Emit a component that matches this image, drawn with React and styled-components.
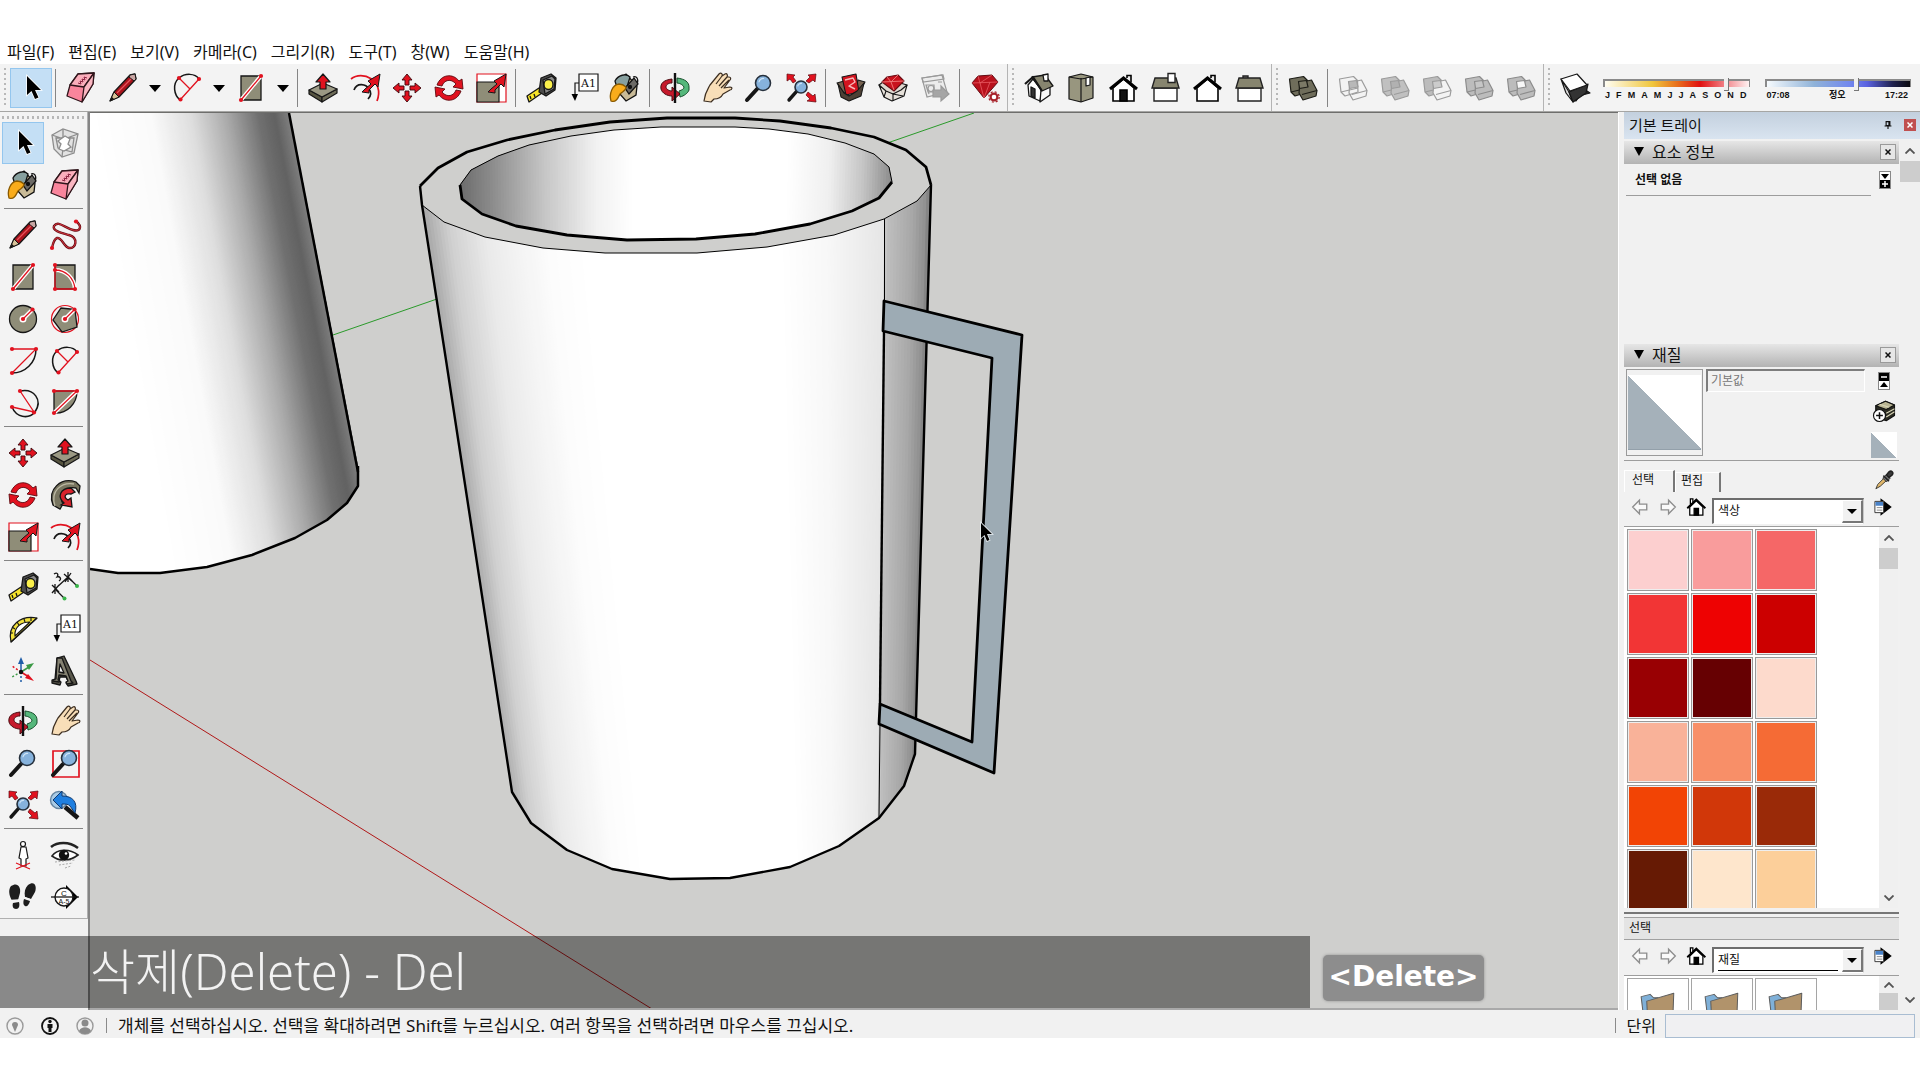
import React from 'react';
import styled, { createGlobalStyle, css } from 'styled-components';

const Global = createGlobalStyle`
  *, *::before, *::after { box-sizing: border-box; }
  body { margin: 0; background: #fff; }
  body, button, input, select { font-family: "Noto Sans", "Noto Sans CJK KR", sans-serif; color: #111; }
  button { border: 0; background: none; padding: 0; margin: 0; }
`;

const RED = '#e1121f';
const OLIVE = '#8f8d78';
const INK = '#161616';

/* ---------- icon drawings, all on a 32 x 32 grid ---------- */

const Dot = ({ x, y, r = 2.1 }) => <circle cx={x} cy={y} r={r} fill={RED} stroke="none" />;

const Lens = ({ cx = 20, cy = 11, r = 7.5, to = '4 28', w = 4 }) => (
  <g>
    <path d={`M${cx - r * 0.7} ${cy + r * 0.7}L${to}`} stroke={INK} strokeWidth={w} strokeLinecap="round" />
    <circle cx={cx} cy={cy} r={r} fill="#86b2dc" stroke="#26303c" strokeWidth="1.6" />
    <path d={`M${cx - r * 0.55} ${cy - r * 0.1}a${r * 0.6} ${r * 0.6} 0 0 1 ${r * 0.7} -${r * 0.5}`} stroke="#cfe4f6" strokeWidth="1.2" />
  </g>
);

const BigArrow = () => (
  <path d="M16 17l6-5-3-3 12-7-2 13-3-3-6 6 0 3-7-1z" fill={RED} stroke={INK} strokeWidth="1" />
);

const House = ({ door }) => (
  <g stroke="#000" strokeWidth="1.6">
    <path d="M20 6v-2.500h4v7" fill="#eee" />
    <path d="M6 16v13h21v-13l-10.500-9z" fill="#fff" />
    <path d="M3 17L16.500 6 30 17" strokeWidth="3" />
    {door && <path d="M13 18h7v11h-7z" fill="#111" />}
  </g>
);

const Barn = ({ chimney }) => (
  <g stroke="#222" strokeWidth="1.4">
    <path d="M5 16h23v13h-23z" fill="#fff" />
    {!chimney && <path d="M10 6v-2h5v2" fill="#888" />}
    <path d="M6 6h21l3 10h-27z" fill="#87856f" />
    {chimney && <path d="M19 1.500h7v9h-7z" fill="#fff" />}
  </g>
);

const Solids = ({ a, b, mid, stroke }) => (
  <g stroke={stroke} strokeWidth="1.200" strokeLinejoin="round">
    <path d="M2.500 7L16.500 4.500 20.500 8.500 21 20 8 24 4 20z" fill={a} />
    <path d="M4 20l17-4" />
    <path d="M13 10.500L24.500 8 30 18.500 29 24 16 28 12 21z" fill={b} />
    <path d="M15 22.500L30 18.500" />
    <path d="M11.500 9.500L19.500 8.500 21 15 12.500 16.500z" fill={mid} />
  </g>
);

const icons = {
  cursor: <path d="M12 4v19l4.500-4 3.500 8 3.500-1.500-3.500-7.500 6 0z" fill="#000" stroke="#fff" strokeWidth="1.600" paintOrder="stroke" />,
  component: (
    <g stroke="#8d8d8d" strokeWidth="1.300">
      <path d="M3 8l11-6 15 5-4 19-12 4-8-8z" fill="#e2e2e2" />
      <path d="M3 8l12 4 14-5M15 12l-2 18M7 11l2 10 14 4 2-14zM14 2l0 9" />
      <path d="M9 14l7-5 5 3-2 5 3 3-7 4-5-2 2-5z" fill="#fff" />
    </g>
  ),
  paint: (
    <g stroke="#111" strokeWidth="1.300">
      <path d="M24 5c5-2 6 5 3 8" />
      <path d="M8 8l9-6 11 12-1 9-10 6-7-8z" fill="#c9bb98" />
      <path d="M6 9c3-6 11-8 15-4l-3 10-9 4z" fill="#87a09f" />
      <path d="M16 16l9-10 4 6-9 10z" fill="#6c6a66" />
      <circle cx="21" cy="15" r="1.500" fill="#111" />
      <path d="M10 12c-7 1-10 10-8 17 5 2 7-3 9-7 3-3 6-3 6-7-2-2-4-3-7-3z" fill="#f9ac1b" stroke="#8a5a00" />
    </g>
  ),
  eraser: (
    <g stroke="#30151b" strokeWidth="1.300" strokeLinejoin="round">
      <path d="M13 2l16-1-1 11-11 18-15-6 3-11z" fill="#f9859c" />
      <path d="M13 2l16-1-10 14-14-2z" fill="#fbaebb" />
      <path d="M19 15l10-14-1 11-11 18z" fill="#fbb7c2" />
      <path d="M13 11l3 1-1-3 3 1-1-3 3 1-1-3 3 1" stroke="#8c2240" strokeWidth="1" />
    </g>
  ),
  pencil: (
    <g strokeLinejoin="round">
      <path d="M3 29l4-9 16-17 5-1 1 5-17 18z" fill="#a9141c" stroke={INK} strokeWidth="1.300" />
      <path d="M3 29l4-9 5 5z" fill="#d8c39a" stroke={INK} />
      <path d="M3 29l2-4 2 2z" fill="#111" />
      <path d="M23 3l5-1 1 5-2 2-5-4z" fill="#c9a7a4" stroke={INK} />
      <path d="M10 21L24 7" stroke="#e8505a" strokeWidth="1.200" />
    </g>
  ),
  freehand: (
    <g>
      <path d="M27 2c7 6 4 11-3 9-8-2-15-10-19-4-2 5 8 7 15 9 10 3 7 14 0 13-6-2-7-11-12-10-3 1-4 5-5 10" stroke="#6b1016" strokeWidth="2.400" />
      <path d="M27 2c7 6 4 11-3 9-8-2-15-10-19-4-2 5 8 7 15 9 10 3 7 14 0 13-6-2-7-11-12-10-3 1-4 5-5 10" stroke="#d5343e" strokeWidth="1" />
      <Dot x={27} y={2.500} /><Dot x={3} y={29} />
    </g>
  ),
  rect: (
    <g>
      <path d="M6 4h20v24h-20z" fill={OLIVE} stroke={INK} strokeWidth="1.300" />
      <path d="M6 28L26 4" stroke="#fff" strokeWidth="4" />
      <path d="M6 28L26 4" stroke={RED} strokeWidth="1.300" />
      <Dot x={6} y={28} /><Dot x={26} y={4} />
    </g>
  ),
  roundedRect: (
    <g>
      <path d="M6 4h20v24h-20z" fill={OLIVE} stroke={INK} strokeWidth="1.300" />
      <path d="M6 9C17 9 25 17 26 28" stroke="#fff" strokeWidth="4" />
      <path d="M6 4v24h20C25 17 17 9 6 9" stroke={RED} strokeWidth="1.300" />
      <Dot x={6} y={4} /><Dot x={6} y={9} /><Dot x={6} y={28} /><Dot x={26} y={28} />
    </g>
  ),
  circle: (
    <g>
      <circle cx="16" cy="16" r="13.500" fill={OLIVE} stroke={INK} strokeWidth="1.300" />
      <path d="M16 16L25 7" stroke="#fff" strokeWidth="4" />
      <circle cx="16" cy="16" r="3.500" fill="#fff" />
      <path d="M16 16L25 7" stroke={RED} strokeWidth="1.300" /><Dot x={16} y={16} /><Dot x={25.500} y={6.500} />
    </g>
  ),
  polygon: (
    <g>
      <circle cx="16" cy="16" r="13.500" stroke={RED} strokeWidth="1.200" />
      <path d="M26 6.500L12 5 4 17l9 12 15-5z" fill={OLIVE} stroke={INK} strokeWidth="1.300" />
      <path d="M16 16L25 7" stroke="#fff" strokeWidth="4" />
      <circle cx="16" cy="16" r="3.500" fill="#fff" />
      <path d="M16 16L25 7" stroke={RED} strokeWidth="1.300" /><Dot x={16} y={16} /><Dot x={25.500} y={6.500} />
    </g>
  ),
  arcLine: (
    <g>
      <path d="M29 4C29 18 18 28 5 28" stroke={INK} strokeWidth="1.500" />
      <path d="M5 4H29L5 28" stroke={RED} strokeWidth="1.300" />
      <Dot x={5} y={4} /><Dot x={29} y={4} /><Dot x={5} y={28} />
    </g>
  ),
  arc: (
    <g>
      <path d="M8 6C14 1 24 1 28 7M8 6C1 12 3 23 9 28" stroke={INK} strokeWidth="1.500" />
      <path d="M8 6L19 17M28 7L9 28" stroke={RED} strokeWidth="1.300" />
      <Dot x={8} y={6} /><Dot x={28} y={7} /><Dot x={9.500} y={27.500} />
    </g>
  ),
  arc3: (
    <g>
      <path d="M13 4C27 1 36 13 28 25 21 33 9 30 5 20" stroke={INK} strokeWidth="1.500" />
      <path d="M13 4L27 25 5 20" stroke={RED} strokeWidth="1.300" />
      <Dot x={13} y={4} /><Dot x={27} y={25.500} /><Dot x={5} y={20} />
    </g>
  ),
  pie: (
    <g>
      <path d="M5 4H28C28 17 18 27 5 26z" fill={OLIVE} stroke={INK} strokeWidth="1.300" />
      <path d="M5 26L28 4" stroke="#fff" strokeWidth="4" />
      <path d="M5 26L28 4H5" stroke={RED} strokeWidth="1.300" />
      <Dot x={5} y={4} /><Dot x={28} y={4} /><Dot x={5} y={26} />
    </g>
  ),
  pushpull: (
    <g stroke={INK} strokeWidth="1.200" strokeLinejoin="round">
      <path d="M2 18l13 7v5l-13-8z" fill="#55533f" />
      <path d="M15 25l15-8v4l-15 9z" fill="#6d6b57" />
      <path d="M2 18l14-7 14 6-15 8z" fill="#9b9984" />
      <path d="M13 17v-7h-4l7-8 7 8h-4v7z" fill={RED} />
    </g>
  ),
  offset: (
    <g>
      <path d="M2 7C13-2 36 8 28 29" stroke={RED} strokeWidth="1.700" />
      <path d="M5 18c3-8 12-6 15-1 3 4 2 7-1 10" stroke={INK} strokeWidth="1.700" />
      <BigArrow />
    </g>
  ),
  move: (
    <g fill={RED} stroke="#3a080b" strokeWidth="0.900">
      {[0, 90, 180, 270].map((a) => (
        <path key={a} transform={`rotate(${a} 16 16)`} d="M16 2l5 6h-3v5h-4v-5h-3z" />
      ))}
    </g>
  ),
  rotate: (
    <g fill={RED} stroke="#5c0a10" strokeWidth="0.900">
      <path d="M4 13C8 2 20 1 26 9l3-2 1 10-10-2 3-3C18 6 11 8 9 14z" />
      <path d="M28 19C24 30 12 31 6 23l-3 2-1-10 10 2-3 3C14 26 21 24 23 18z" />
    </g>
  ),
  scale: (
    <g>
      <path d="M2 2h29v28h-29z" stroke={RED} strokeWidth="1.200" fill="#fff" />
      <path d="M2 10h22v20h-22z" fill={OLIVE} stroke={INK} strokeWidth="1.200" />
      <BigArrow />
    </g>
  ),
  followme: (
    <g stroke={INK} strokeWidth="1.300">
      <path d="M27 3C12-2-2 10 4 26l7 4 3-5C9 16 17 7 27 9l3 5 1-7z" fill="#77745f" />
      <path d="M6 27C1 12 12 3 25 5" stroke="#bbb8a4" />
      <path d="M22 9c-11 0-14 9-7 15l-3 2 11 2-1-9-3 2c-5-3-3-7 3-6l4-2z" fill="#d9222c" />
    </g>
  ),
  tape: (
    <g stroke={INK} strokeWidth="1.300" strokeLinejoin="round">
      <path d="M2 24l12-8 3 5-13 9z" fill="#f7e52a" />
      <path d="M5 24l1 3M9 22l1 3" />
      <path d="M16 6l10-4 5 4-1 12-9 6-7-4z" fill="#4b4b4b" />
      <path d="M18 8l9-4 3 3-1 10-9 5z" fill="#8a8a8a" />
      <ellipse cx="23.500" cy="12.500" rx="4.500" ry="5" fill="#fbf04b" />
    </g>
  ),
  dimension: (
    <g stroke={INK} strokeWidth="1.300">
      <path d="M6 18L19 6M3 14l7 7M10 14l-7 8M6 13v10M15 3l8 7M22 2l-6 9M19 1v10" />
      <path d="M6 18l9 9M19 6l9 9" />
      <circle cx="15.500" cy="27.500" r="2" fill="#39b54a" stroke="none" /><circle cx="28" cy="15" r="2" fill="#39b54a" stroke="none" />
      <path d="M5 3c3-2 5 0 3 3 3-1 5 2 2 4" />
    </g>
  ),
  protractor: (
    <g stroke={INK} strokeWidth="1.200" strokeLinejoin="round">
      <path d="M4 29C0 12 14 2 30 5z" fill="#f2e13a" />
      <path d="M8 23C7 14 14 9 23 9z" fill="#fff" />
      <path d="M3 20l3 0M5 14l3 2M10 9l2 3M17 6l1 3M24 5l0 3M4 29L30 5" />
    </g>
  ),
  label: (
    <g>
      <path d="M12 2h19v17h-19z" fill="#fff" stroke={INK} strokeWidth="1.200" />
      <text x="21.500" y="14.500" textAnchor="middle" fontFamily="DejaVu Serif, serif" fontSize="11" fill="#111">A1</text>
      <path d="M12 11h-4v13" stroke={INK} strokeWidth="1.200" />
      <path d="M4.500 22h6.500l-3 7z" fill="#000" />
    </g>
  ),
  axes: (
    <g strokeWidth="1.500">
      <path d="M14 17V8" stroke="#1f5da8" /><path d="M11 9l3-7 3 7z" fill="#1f5da8" />
      <path d="M14 17l8-5" stroke="#3b9a45" /><path d="M19 10l8-2-5 7z" fill="#3b9a45" />
      <path d="M14 17l8 5" stroke={RED} /><path d="M21 19l6 7-9-3z" fill={RED} />
      <path d="M14 17v12" stroke="#1f5da8" strokeDasharray="2 2" />
      <path d="M14 17l-9-6" stroke={RED} strokeDasharray="2 2" /><path d="M14 17l-9 5" stroke="#3b9a45" strokeDasharray="2 2" />
      <circle cx="14" cy="17" r="2.200" fill="#111" />
    </g>
  ),
  text3d: (
    <g stroke={INK} strokeWidth="1.300" strokeLinejoin="round">
      <path d="M8 3l7-2 12 25 1 3-9 2-2-3 2-2-2-4h-6l-1 4 2 1-1 3-8-2v-3l3-1z" fill="#5b594c" />
      <path d="M8 3l5 0 9 23 2 2-6 1-1-2 2-1-2-5-7-1-1 5 2 1-1 1-6-1v-1l3-1z" fill="#858272" />
      <path d="M10 17l1-8 4 9z" fill="#f2f2f2" />
    </g>
  ),
  orbit: (
    <g strokeLinejoin="round">
      <path d="M18 6C26 7 30 10 30 15v3c-1 3-5 6-9 7l-1-6c3-1 5-2 5-4-1-2-4-4-7-4z" fill="#55b77b" stroke="#174f2c" />
      <path d="M13 7C5 8 1 11 2 17 3 21 8 24 13 24v5l8-7-8-7v4C10 19 7 17 7 15c0-2 2-4 6-4z" fill="#c5192b" stroke="#4b0a10" />
      <path d="M16 1v30" stroke="#111" strokeWidth="2.400" />
    </g>
  ),
  pan: (
    <path d="M3 29c1-9 4-12 6-16L18 2c2-2 4 0 3 2l3-2c2-1 3 1 2 3l2 0c2 0 2 2 1 3l-6 8 6-1c3 0 2 3 0 3l-7 4c-2 4-6 5-9 5l-3 3zM21 4l-6 8M26 5l-8 9M28 8l-8 8" fill="#f8deb8" stroke="#3b2d20" strokeWidth="1.200" strokeLinejoin="round" />
  ),
  zoom: <Lens />,
  zoomWindow: <g><path d="M4 4h26v26h-26z" stroke={RED} strokeWidth="1.700" /><Lens cx={20} cy={11} /></g>,
  zoomExtents: (
    <g>
      <Lens cx={16} cy={15} r={6} to="4 28" w={3.400} />
      <g fill={RED} stroke="#5c0a10" strokeWidth="0.700">
        <path d="M2 2l8 1-2 2 3 4-3 2-3-4-3 2z" /><path d="M31 2l-8 1 2 2-4 4 3 2 4-3 2 2z" /><path d="M31 30l-1-8-2 2-5-4-2 3 4 4-3 2z" />
      </g>
    </g>
  ),
  previous: (
    <g>
      <circle cx="10" cy="11" r="8.500" fill="#a9cbe6" stroke="#6685a0" strokeWidth="1.400" />
      <path d="M16 18L29 29" stroke={INK} strokeWidth="4.500" />
      <path d="M4 11L13 2v5c11 0 16 6 13 17l-5-7c-2-2-4-2-8-2v5z" fill="#1f7fe0" stroke="#123a6e" />
    </g>
  ),
  position: (
    <g stroke={INK} strokeWidth="1.200">
      <circle cx="16" cy="5" r="2.500" fill="#fff" />
      <path d="M14 8h5l2 11-2 1v7h-5v-7l-2-1z" fill="#fff" />
      <path d="M9 24l14 6M23 24L9 30" stroke={RED} />
    </g>
  ),
  eye: (
    <g>
      <path d="M2 8C8 3 20 2 29 9" stroke="#222" strokeWidth="2.500" />
      <path d="M3 17c5-7 17-8 26-1-8 6-18 7-26 1z" fill="#fff" stroke="#222" strokeWidth="1.600" />
      <circle cx="15" cy="16" r="5.200" fill="#111" /><circle cx="17" cy="14.500" r="1.300" fill="#fff" />
      <path d="M6 23l20-2M10 26l14-2M16 29l6-2" stroke="#aaa" strokeDasharray="2 1.500" />
    </g>
  ),
  walk: (
    <g fill="#1d1d1d">
      <path d="M4 5c6-4 10 0 9 7l-2 7-6 1C2 14 1 9 4 5z" /><path d="M6 22l6-1c1 4 0 7-3 7s-4-3-3-6z" />
      <path d="M21 4c7-5 9 2 7 7l-4 7-6-2c-1-5 0-9 3-12z" /><path d="M17 18l6 2c-1 4-3 6-5 5-2-1-2-4-1-7z" />
      <path d="M4 19.500l8-.500M16 16l8 3" stroke="#f3f3f3" strokeWidth="1.500" />
    </g>
  ),
  section: (
    <g>
      <path d="M17 4l12 12-12 12z" fill="#000" />
      <circle cx="15" cy="16" r="9" fill="#fff" stroke={INK} strokeWidth="1.400" />
      <path d="M2 16h28" stroke={INK} strokeWidth="1.300" />
      <text x="15" y="14.500" textAnchor="middle" fontFamily="Liberation Sans, sans-serif" fontSize="8" fill="#111">C</text>
      <text x="15" y="23" textAnchor="middle" fontFamily="Liberation Sans, sans-serif" fontSize="7" fill="#111">A-5</text>
    </g>
  ),
  warehouse: (
    <g stroke={INK} strokeWidth="1.100" strokeLinejoin="round">
      <path d="M2 11l7-2 6 10-6 2z" fill="#776351" /><path d="M23 8l7 2-5 9-4-3z" fill="#776351" />
      <path d="M7 5l14-3 3 18-13 3z" fill="#d3141f" />
      <path d="M10 8l8-2 2 4-6 4 6 3" stroke="#f6b8b8" strokeWidth="1.400" />
      <path d="M3 12l6 9 5 3 8-5 7-8-3 13-12 5-8-4z" fill="#4d4035" />
    </g>
  ),
  extension: (
    <g stroke={INK} strokeWidth="1.100" strokeLinejoin="round">
      <path d="M2 13l8-6 20 6-4 7-16 3z" fill="#ded8d0" />
      <path d="M5 10l5-5 11-2 6 6-10 10z" fill="#c9121d" stroke="#680b12" />
      <path d="M5 10l22-1M10 5l4 5 7-7M14 10l3 8" stroke="#f07a7a" strokeWidth="0.900" />
      <path d="M2 13l7 6 7 3 8-4 6-5-3 11-12 5-8-4z" fill="#e6e1da" />
      <path d="M7 25l2-6M26 24l-10-2v7" />
    </g>
  ),
  sendLayout: (
    <g stroke="#9a9a9a" strokeWidth="1.200">
      <path d="M3 6l20-3 5 17-20 5z" fill="#ececec" /><path d="M3 6l21-3 1 4-21 3zM7 13l3 9M7 13h8v7h-6zM19 10l4 0" />
      <circle cx="12" cy="16.500" r="3" />
      <path d="M14 18h8v-4l8 8-8 7v-4h-8z" fill="#a5a5a5" />
    </g>
  ),
  ruby: (
    <g strokeLinejoin="round">
      <path d="M3 11l6-7 14-1 6 7-14 16z" fill="#b8111c" stroke="#610a11" />
      <path d="M9 4l2 7 12-8M3 11l26-1M11 11l4 15 6-16" stroke="#e85a62" strokeWidth="0.800" />
      <circle cx="25" cy="25" r="3.400" fill="#fff" stroke="#a8232b" strokeWidth="2.200" />
      <circle cx="25" cy="25" r="5.200" stroke="#a8232b" strokeWidth="1.300" strokeDasharray="2 2.100" />
    </g>
  ),
  iso: (
    <g stroke={INK} strokeWidth="1.300" strokeLinejoin="round">
      <path d="M5 13l5-6 9 11-2 11-11-5z" fill="#fff" /><path d="M18 18l9-4v9l-10 7z" fill="#f7f7f7" />
      <path d="M8 15l4 2v9l-4-2z" fill="#333" />
      <path d="M9 5l13-2 8 11-11 5z" fill="#87856f" /><path d="M2 12l8-7 9 14" strokeWidth="2.200" />
      <path d="M20 3l5-1 0 7-4 0z" fill="#fff" />
    </g>
  ),
  topView: (
    <g stroke={INK} strokeWidth="1.200" strokeLinejoin="round">
      <path d="M4 5l12-3 12 3v21l-12 4-12-3z" fill="#98967f" /><path d="M16 6v24M4 5l12 2 12-2" />
      <path d="M21 6l4-1v8l-4 1z" fill="#fff" />
    </g>
  ),
  front: <House door />,
  right: <Barn chimney />,
  back: <House />,
  left: <Barn />,
  outerShell: <Solids a="#6f6d5b" b="#6f6d5b" mid="#7b7966" stroke="#1d1d17" />,
  intersect: <Solids a="none" b="none" mid="#b8b8b8" stroke="#9b9b9b" />,
  union: <Solids a="#c0c0c0" b="#c0c0c0" mid="#b1b1b1" stroke="#9b9b9b" />,
  subtract: <Solids a="#bcbcbc" b="#f3f3f3" mid="#ccc" stroke="#9b9b9b" />,
  trim: <Solids a="#bcbcbc" b="#bcbcbc" mid="#c6c6c6" stroke="#8c8c8c" />,
  split: <Solids a="#bcbcbc" b="#bcbcbc" mid="#f7f7f7" stroke="#8c8c8c" />,
  shadows: (
    <g stroke={INK} strokeWidth="1.200" strokeLinejoin="round">
      <path d="M12 26l19-5-6-4-8 12-4-1z" fill="#222" />
      <path d="M2 7l8 13 4 10-7-9z" fill="#ddd" /><path d="M10 20l19-8-2 9-13 9z" fill="#333" />
      <path d="M2 7l16-5 10 11-17 6z" fill="#fff" />
    </g>
  ),
  navLeft: <path d="M3 16L15 4v7h13v10h-13v7z" fill="#fafafa" stroke="#8e8e8e" strokeWidth="2.400" />,
  navRight: <path d="M29 16L17 4v7h-13v10h13v7z" fill="#fafafa" stroke="#8e8e8e" strokeWidth="2.400" />,
  home: (
    <g stroke="#000" strokeWidth="2">
      <path d="M7 12V3h4v5" fill="#fff" /><path d="M6 16v13h21v-13l-10.500-10z" fill="#fff" />
      <path d="M2 18L16.500 4 31 18" strokeWidth="3" /><path d="M13 18h7v11h-7z" fill="#000" />
    </g>
  ),
  details: (
    <g>
      <path d="M12 2l18 14-18 14z" fill="#000" />
      <path d="M3 7h14v18h-14z" fill="#fff" stroke="#333" strokeWidth="1.500" />
      <path d="M4 8h12v6h-12z" fill="#4a83c9" /><path d="M6 17h9M6 21h9" stroke="#888" strokeWidth="1.500" />
    </g>
  ),
  createMaterial: (
    <g stroke="#111" strokeWidth="1.500" strokeLinejoin="round">
      <path d="M5 9l13-6 12 5v14l-11 7-14-5z" fill="#2b2b22" />
      <path d="M5 9l13-6 12 5-11 6z" fill="#b9b593" /><path d="M10 7l13 4M19 19l11-6M19 24l11-7" stroke="#d9d6b8" />
      <circle cx="10" cy="22" r="8" fill="#fff" /><path d="M10 17.500v9M5.500 22h9" strokeWidth="2" />
    </g>
  ),
  dropper: (
    <g stroke="#222" strokeWidth="1.300">
      <path d="M3 30l3-7L18 11l4 4L10 26z" fill="#e0b76a" /><path d="M14 13l6-6 6 6-6 6z" fill="#777" />
      <path d="M15 9l9 9M20 8l4-5c4-3 8 1 5 5l-5 4z" fill="#3b3b3b" strokeWidth="2.500" />
    </g>
  ),
  pin: <path d="M10 5h12v13h-12zM19 5v13M5 19h22M16 19v10" stroke="#111" strokeWidth="3.600" />,
  folder: (
    <g stroke="#5d5d5d" strokeWidth="0.900" strokeLinejoin="round">
      <path d="M1 5l8-2 3 3 4 0v24H4z" fill="#7fb0d8" /><path d="M6 9L30 2l-1 28H7z" fill="#b1936b" />
    </g>
  ),
};

const Glyph = styled.svg`
  display: block;
  flex: none;
  width: ${(p) => p.$size}px;
  height: ${(p) => p.$size}px;
  overflow: visible;
`;

const Icon = ({ name, size = 32 }) => (
  <Glyph $size={size} viewBox="0 0 32 32" fill="none" aria-hidden="true">{icons[name]}</Glyph>
);

/* ---------- frame ---------- */

const Page = styled.div`
  display: flex;
  flex-direction: column;
  height: 100vh;
  min-height: 900px;
  padding: 44px 0 42px;
`;

const MenuBar = styled.nav`
  display: flex;
  gap: 14px;
  height: 20px;
  padding-left: 7px;
`;

const MenuItem = styled.button`
  height: 16px;
  font-size: 16px;
  line-height: 16px;
  white-space: nowrap;
`;

const Toolbar = styled.header`
  display: flex;
  height: 48px;
  background: #f3f3f3;
  border-bottom: 1px solid #a6a6a4;
`;

const ToolGroup = styled.div`
  display: flex;
  align-items: center;
  padding: 1px 1px 0 4px;
  border-right: 1px solid #b4b4b4;
  ${(p) => p.$fill && css`flex: 1; border-right: 0;`}
`;

const Grip = styled.span`
  flex: none;
  ${(p) => p.$across
    ? css`height: 3px; margin: 4px 0 3px; background: repeating-linear-gradient(90deg, #b8b8b8 0 2px, transparent 2px 5px);`
    : css`width: 2px; height: 40px; margin-right: 4px; background: repeating-linear-gradient(#b8b8b8 0 2px, transparent 2px 5px);`}
`;

const ToolButton = styled.button`
  display: grid;
  place-items: center;
  flex: none;
  width: 42px;
  height: ${(p) => (p.$tall ? 42 : 40)}px;
  ${(p) => p.$on && css`background: #c4dff5; border: 1px solid #94c6ee;`}
`;

const DropButton = styled.button`
  display: grid;
  place-items: center;
  width: 22px;
  height: 40px;
  &::after {
    content: "";
    border: 6px solid transparent;
    border-top: 7px solid #000;
    border-bottom: 0;
  }
`;

const Rule = styled.span`
  flex: none;
  ${(p) => p.$across
    ? css`height: 8px; margin: 0 2px; background: linear-gradient(#858585, #858585) 0 2px / 100% 1px no-repeat;`
    : css`width: 8px; height: 38px; background: linear-gradient(#858585, #858585) 3px 0 / 1px 100% no-repeat;`}
`;

const Sun = styled.div`
  display: flex;
  gap: 15px;
  flex: 1;
  padding: 0 8px 0 7px;
`;

const SunField = styled.label`
  display: flex;
  flex-direction: column;
  flex: 1;
`;

const Range = styled.input`
  appearance: none;
  display: block;
  width: 100%;
  height: 14px;
  margin: 0;
  background: transparent;
  &::-webkit-slider-runnable-track {
    height: 8px;
    border: solid #8a8a8a;
    border-width: 2px 1px 0 2px;
    background: ${(p) => p.$track};
  }
  &::-webkit-slider-thumb {
    appearance: none;
    width: 5px;
    height: 13px;
    margin-top: -3px;
    background: #f0f0f0;
    border: solid #777;
    border-width: 0 1px 1px 0;
  }
`;

const Ticks = styled.span`
  display: flex;
  justify-content: space-between;
  padding: 0 3px 0 2px;
  font: 700 9px/11px "Liberation Sans", "Noto Sans CJK KR", sans-serif;
`;

const Workspace = styled.main`
  position: relative;
  display: flex;
  flex: 1;
  min-height: 0;
`;

const ToolBox = styled.aside`
  display: flex;
  flex-direction: column;
  flex: none;
  width: 90px;
  background: #f1f1f1;
  border-right: 2px solid #858585;
`;

const ToolStack = styled.div`
  display: flex;
  flex-direction: column;
  padding: 0 2px;
  background: #f3f3f3;
  border: solid #b0b0b0;
  border-width: 0 1px 1px 0;
`;

const ToolGrid = styled.div`
  display: grid;
  grid-template-columns: 42px 42px;
`;

const Viewport = styled.div`
  flex: 1;
  min-width: 0;
  background: #cfcfcd;
  border: solid;
  border-width: 1px 0 2px;
  border-color: #6e6e6c transparent #a9a9a9;
`;

const Scene = styled.svg`
  display: block;
  width: 100%;
  height: 100%;
`;

const Caption = styled.div`
  position: absolute;
  left: 0;
  bottom: 2px;
  display: flex;
  align-items: center;
  width: 1310px;
  max-width: 70%;
  height: 72px;
  padding: 0 0 2px 90px;
  background: rgba(0, 0, 0, 0.43);
  color: #f2f2f2;
  font-size: 49px;
  font-weight: 300;
  line-height: 60px;
  white-space: nowrap;
`;

const KeyBadge = styled.kbd`
  position: absolute;
  left: 1323px;
  bottom: 9px;
  width: 161px;
  height: 46px;
  border-radius: 5px;
  background: #8d8d8d;
  box-shadow: 0 0 3px #8d8d8d;
  color: #fff;
  font: 700 28px/44px "DejaVu Sans", sans-serif;
  text-align: center;
`;

/* ---------- tray ---------- */

const Tray = styled.aside`
  display: flex;
  flex-direction: column;
  flex: none;
  width: 302px;
  padding-left: 5px;
  background: #f1f1f1;
  border-left: 1px solid #fff;
`;

const TrayTitle = styled.div`
  display: flex;
  align-items: center;
  flex: none;
  gap: 8px;
  height: 27px;
  padding: 0 4px 2px 5px;
  background: linear-gradient(#c3d0de, #d9e4f0);
  font-size: 15px;
  line-height: 20px;
  span { flex: 1; }
`;

const CloseBox = styled.button`
  display: grid;
  place-items: center;
  width: ${(p) => (p.$red ? 12 : 16)}px;
  height: ${(p) => (p.$red ? 12 : 16)}px;
  background: ${(p) => (p.$red ? '#c0504f' : '#e6e6e6')};
  border: ${(p) => (p.$red ? '0' : '1px solid #9a9a9a')};
  color: ${(p) => (p.$red ? '#fff' : '#111')};
  svg { width: 6px; height: 6px; }
`;

const Cross = () => <svg viewBox="0 0 6 6" aria-hidden="true"><path d="M0.500 0.500l5 5M5.500 0.500l-5 5" stroke="currentColor" strokeWidth="1.500" /></svg>;

const TrayBody = styled.div`
  display: flex;
  flex: 1;
  gap: 1px;
  min-height: 0;
  padding-top: 1px;
`;

const Panels = styled.div`
  display: flex;
  flex-direction: column;
  flex: 1;
  min-width: 0;
  padding-top: 1px;
`;

const SectionHead = styled.h2`
  display: flex;
  align-items: center;
  flex: none;
  height: 23px;
  margin: 0;
  padding: 0 3px 2px 10px;
  background: linear-gradient(#e6e6e6, #b3b3b3);
  font-size: 16px;
  font-weight: 400;
  line-height: 20px;
  &::before {
    content: "";
    margin-right: 8px;
    border: 5px solid transparent;
    border-top: 9px solid #000;
    border-bottom: 0;
  }
  span { flex: 1; }
`;

const EntityInfo = styled.div`
  flex: none;
  height: 180px;
`;

const EntityRow = styled.div`
  display: flex;
  align-items: center;
  justify-content: space-between;
  height: 31px;
  padding: 0 8px 0 11px;
  font-size: 12px;
  font-weight: 700;
  line-height: 16px;
`;

const ThinLine = styled.hr`
  flex: none;
  height: 1px;
  margin: ${(p) => (p.$inset ? '0 28px 0 2px' : '0')};
  border: 0;
  background: #9d9d9d;
`;

const Expander = styled.button`
  display: flex;
  flex-direction: ${(p) => (p.$flip ? 'column-reverse' : 'column')};
  width: 12px;
  height: 18px;
  border: 1px solid #888;
  background: #fff;
  svg { display: block; width: 10px; height: 8px; }
`;

const ExpanderIcon = ({ plus }) => (
  <>
    <svg viewBox="0 0 10 8"><path d={plus ? 'M1 2h8l-4 5z' : 'M1 6h8l-4-5z'} fill="#000" /></svg>
    <svg viewBox="0 0 10 8"><path d="M-1-1h12v10h-12z" fill="#000" /><path d={plus ? 'M2 4h6M5 1v6' : 'M2 4h6'} stroke="#fff" strokeWidth="1.500" /></svg>
  </>
);

const MaterialRow = styled.div`
  display: flex;
  flex: none;
  align-items: flex-start;
  padding: 2px 2px 2px;
`;

const Preview = styled.div`
  width: 77px;
  height: 87px;
  padding: 5px 1px;
  border: 1px solid #9a9a9a;
  &::before {
    content: "";
    display: block;
    height: 75px;
    background: linear-gradient(to top right, #a5b1ba 50%, #fff 50%);
    border-bottom: 1px solid #93a0aa;
  }
`;

const NameField = styled.input`
  flex: 1;
  min-width: 0;
  height: 23px;
  margin-left: 3px;
  padding: 0 3px 2px;
  border: solid;
  border-width: 2px 1px 1px 2px;
  border-color: #7d7d7d #fff #fff #7d7d7d;
  background: #f1f1f1;
  color: #777;
  font-size: 12px;
`;

const MaterialTools = styled.div`
  display: flex;
  flex-direction: column;
  align-items: center;
  gap: 9px;
  width: 32px;
  padding: 3px 0 0 6px;
`;

const DefaultChip = styled.button`
  width: 26px;
  height: 26px;
  background: linear-gradient(to top right, #a5b1ba 50%, #fff 50%);
`;

const TabRow = styled.div`
  display: flex;
  align-items: flex-end;
  flex: none;
  height: 31px;
  padding-right: 4px;
`;

const Tab = styled.button`
  align-self: flex-end;
  width: ${(p) => (p.$on ? 51 : 46)}px;
  height: ${(p) => (p.$on ? 22 : 20)}px;
  padding: 0 0 3px ${(p) => (p.$on ? 7 : 5)}px;
  border: solid;
  border-width: 1px 2px 0 1px;
  border-color: #fff #777 #777 #fff;
  font-size: 12px;
  line-height: 14px;
  text-align: left;
`;

const Spacer = styled.span`flex: 1;`;

const IconButton = styled.button`
  display: grid;
  place-items: center;
  width: ${(p) => p.$w || 28}px;
  height: 24px;
`;

const NavRow = styled.div`
  display: flex;
  align-items: flex-start;
  flex: none;
  height: 34px;
  padding: 3px 2px 0;
`;

const Combo = styled.div`
  display: grid;
  grid-template-columns: 1fr 21px;
  flex: 1;
  height: 26px;
  margin: 3px 5px 0 2px;
  border: solid;
  border-width: 2px 1px 1px 2px;
  border-color: #6d6d6d #c8c8c8 #fff #6d6d6d;
  background: #fff;
`;

const ComboSelect = styled.select`
  grid-area: 1 / 1 / 2 / 3;
  appearance: none;
  min-width: 0;
  margin: 0 25px 1px 4px;
  padding: 0;
  border: 0;
  border-bottom: 1px solid ${(p) => (p.$underline ? '#000' : 'transparent')};
  border-radius: 0;
  background: transparent;
  font-size: 12px;
`;

const ComboArrow = styled.span`
  grid-area: 1 / 2;
  display: grid;
  place-items: center;
  pointer-events: none;
  background: #f1f1f1;
  border: solid;
  border-width: 1px 2px 2px 1px;
  border-color: #fff #777 #777 #fff;
  &::after {
    content: "";
    border: 5px solid transparent;
    border-top: 5px solid #000;
    border-bottom: 0;
  }
`;

const ListRow = styled.div`
  display: flex;
  overflow: hidden;
  padding-right: 1px;
  ${(p) => (p.$grow ? css`flex: 1; min-height: 0;` : css`flex: none; height: 34px;`)}
`;

const Swatches = styled.div`
  display: grid;
  flex: 1;
  grid-template-columns: repeat(3, 62px);
  grid-auto-rows: 62px;
  gap: 2px;
  padding: 2px 3px;
  background: #fff;
`;

const Swatch = styled.button`
  border: 1px solid #999;
  padding: 1px;
  background: ${(p) => p.$color} content-box;
  box-shadow: inset 0 0 0 1px #eee;
`;

const FolderCard = styled.button`
  display: grid;
  place-items: center;
  border: 1px solid #a5a5a5;
  background: #fff;
`;

const ScrollBar = styled.div`
  display: flex;
  flex-direction: column;
  flex: none;
  align-items: center;
  width: ${(p) => p.$w}px;
  background: #f0f0f0;
  button { display: grid; place-items: center; width: 100%; height: 21px; }
  svg { width: 10px; height: 6px; }
`;

const Thumb = styled.span`
  width: 100%;
  height: 21px;
  background: #cdcdcd;
`;

const Chevron = ({ down }) => (
  <svg viewBox="0 0 10 6" fill="none" aria-hidden="true"><path d={down ? 'M0.500 0.500L5 5 9.500 0.500' : 'M0.500 5.500L5 1 9.500 5.500'} stroke="#555" strokeWidth="1.800" /></svg>
);

const Scroller = ({ w, noDown }) => (
  <ScrollBar $w={w}>
    <button aria-label="위로"><Chevron /></button>
    <Thumb />
    <Spacer />
    {!noDown && <button aria-label="아래로"><Chevron down /></button>}
  </ScrollBar>
);

const SubHead = styled.h3`
  flex: none;
  height: 33px;
  margin: 0;
  padding-top: 5px;
  border-top: 4px solid #f1f1f1;
  font-size: 12px;
  font-weight: 400;
  line-height: 20px;
  box-shadow: inset 0 2px #777;
  span {
    display: block;
    height: 23px;
    padding-left: 5px;
    border: solid #a0a0a0;
    border-width: 1px 0;
    background: #e4e4e4;
  }
`;

const StatusBar = styled.footer`
  display: flex;
  align-items: center;
  flex: none;
  height: 28px;
  padding-top: 3px;
  background: #f1f1f1;
  font-size: 17px;
  line-height: 24px;
`;

const StatusIcons = styled.div`
  display: flex;
  gap: 17px;
  padding: 0 12px 0 6px;
  svg { display: block; width: 18px; height: 18px; }
`;

const StatusText = styled.p`
  flex: 1;
  margin: 0 0 0 11px;
`;

const Bar = styled.span`
  width: 1px;
  height: 15px;
  background: #8a8a8a;
`;

const Units = styled.label`
  display: flex;
  align-items: center;
  gap: 9px;
  padding: 0 5px 0 11px;
  font-size: 16px;
`;

const UnitsInput = styled.input`
  width: 250px;
  height: 24px;
  border: 1px solid #a9bdd2;
  background: #f0f0f2;
`;

/* ---------- model ---------- */

const pts = (list) => list.map((p) => p.join(',')).join(' ');

const rimBack = [[420, 186], [438, 168], [467, 152], [507, 140], [555, 130], [610, 122], [667, 118], [735, 118], [780, 121], [831, 128], [874, 137], [906, 150], [926, 167], [931, 185]];
const rimFront = [[931, 185], [917, 201], [884, 219], [834, 235], [767, 247], [697, 253], [605, 253], [543, 248], [485, 237], [444, 222], [422, 205], [420, 186]];
const innerBack = [[460, 185], [471, 170], [498, 156], [529, 145], [571, 136], [614, 130], [661, 127], [735, 127], [769, 129], [808, 134], [845, 143], [874, 154], [889, 167], [892, 182]];
const innerFront = [[892, 182], [879, 198], [852, 211], [810, 224], [755, 234], [696, 239], [627, 240], [567, 235], [516, 226], [482, 214], [462, 199], [460, 185]];
const base = [[512, 792], [531, 823], [567, 850], [612, 869], [670, 879], [730, 878], [790, 867], [839, 846], [879, 818], [904, 786], [915, 754]];
const tumblerBase = [[358, 466], [358, 486], [347, 503], [327, 520], [295, 538], [252, 555], [207, 567], [160, 573], [118, 573], [90, 569]];

const shadeAt = (stops, t) => {
  const i = Math.max(1, stops.findIndex((s) => s[0] >= t));
  const [a, b] = [stops[i - 1], stops[i]];
  return Math.round(a[1] + ((b[1] - a[1]) * (t - a[0])) / (b[0] - a[0]));
};

/* Each strip runs on under the ones after it, so no seam shows between two of them. */
const Shading = ({ top, bottom, y0, y1, stops, n = 160, clip }) => (
  <g clipPath={`url(#${clip})`}>
    {Array.from({ length: n }, (_, i) => {
      const x = (edge, k) => edge[0] + ((edge[1] - edge[0]) * k) / n;
      const v = shadeAt(stops, (i + 0.5) / n);
      const end = Math.min(n, i + 4);
      return <polygon key={i} fill={`rgb(${v},${v},${v})`} points={pts([[x(top, i), y0], [x(top, end), y0], [x(bottom, end), y1], [x(bottom, i), y1]])} />;
    })}
  </g>
);

const Model = () => (
  <Scene viewBox="90 113 1528 895" preserveAspectRatio="xMinYMin slice" fill="none" role="img" aria-label="3D">
    <defs>
      <clipPath id="mug"><polygon points={pts([...rimFront.slice().reverse(), ...base.slice().reverse()])} /></clipPath>
      <clipPath id="hollow"><polygon points={pts([...innerBack, ...innerFront])} /></clipPath>
      <clipPath id="tumbler"><polygon points={pts([[90, 100], [287, 100], ...tumblerBase])} /></clipPath>
    </defs>
    <path d="M90 660L652 1009" stroke="#b01818" />
    <path d="M333 335L974 113" stroke="#2a9a2a" />
    <polygon points={pts([[90, 100], [287, 100], ...tumblerBase])} fill="#fff" />
    <Shading clip="tumbler" top={[90, 290]} bottom={[170, 380]} y0={113} y1={573} stops={[[0, 255], [0.3, 250], [0.5, 222], [0.68, 170], [0.84, 112], [0.92, 98], [1, 130]]} />
    <g stroke="#000" strokeWidth="2.500" strokeLinejoin="round">
      <path d="M289 113L358 472" />
      <polyline points={pts(tumblerBase)} />
    </g>
    <Shading clip="mug" top={[418, 933]} bottom={[520, 914]} y0={186} y1={880} stops={[[0, 165], [0.05, 208], [0.12, 234], [0.24, 252], [0.32, 255], [0.7, 255], [0.8, 247], [0.905, 230], [0.91, 192], [0.96, 168], [0.985, 145], [1, 112]]} />
    <polygon points={pts([...rimBack, ...rimFront])} fill="#cfcfcd" />
    <Shading clip="hollow" top={[456, 896]} bottom={[458, 892]} y0={125} y1={242} stops={[[0, 105], [0.08, 140], [0.2, 198], [0.32, 242], [0.4, 255], [0.75, 255], [0.85, 240], [0.93, 195], [1, 135]]} />
    <polyline points={pts(rimFront)} stroke="#000" />
    <polyline points={pts(innerBack)} stroke="#000" />
    <g stroke="#000" strokeWidth="2.800" strokeLinejoin="round">
      <polyline points={pts(rimBack)} />
      <polyline points={pts(innerFront)} />
      <polyline points={pts([[420, 186], [422, 205], [446, 360], ...base, [931, 185]])} strokeWidth="2.400" />
    </g>
    <path d="M884.500 219V301M880 724L879 818" stroke="#000" />
    <path fillRule="evenodd" d="M884 301L1022 335 994 773 879 724 880 704 972 742 992 358 883 331z" fill="#9dabb4" stroke="#000" strokeWidth="2.800" strokeLinejoin="round" />
    <path d="M884 331L880 704" stroke="#000" strokeWidth="2.400" />
    <path d="M981 523v15l3.500-3 2.500 6 2.500-1-2.500-6h5z" fill="#000" stroke="#e8eef2" strokeWidth="1.600" paintOrder="stroke" />
  </Scene>
);

/* ---------- data ---------- */

const menus = ['파일(F)', '편집(E)', '보기(V)', '카메라(C)', '그리기(R)', '도구(T)', '창(W)', '도움말(H)'];

const mainTools = ['cursor*', '|', 'eraser', 'pencil', 'v', 'arc', 'v', 'rect', 'v', '|', 'pushpull', 'offset', 'move', 'rotate', 'scale', '|', 'tape', 'label', 'paint', '|', 'orbit', 'pan', 'zoom', 'zoomExtents', '|', 'warehouse', 'extension', 'sendLayout', '|', 'ruby'];
const viewTools = ['iso', 'topView', 'front', 'right', 'back', 'left'];
const solidTools = ['outerShell', '|', 'intersect', 'union', 'subtract', 'trim', 'split'];

const sideTools = [
  ['cursor*', 'component', 'paint', 'eraser'],
  ['pencil', 'freehand', 'rect', 'roundedRect', 'circle', 'polygon', 'arcLine', 'arc', 'arc3', 'pie'],
  ['move', 'pushpull', 'rotate', 'followme', 'scale', 'offset'],
  ['tape', 'dimension', 'protractor', 'label', 'axes', 'text3d'],
  ['orbit', 'pan', 'zoom', 'zoomWindow', 'zoomExtents', 'previous'],
  ['position', 'eye', 'walk', 'section'],
];

const colors = ['#fccfcf', '#f99c9c', '#f56767', '#f23535', '#ee0202', '#cc0000', '#990003', '#660002', '#fddacc', '#f9b299', '#f88f68', '#f56b35', '#f24405', '#d13709', '#9a2a08', '#661a04', '#fee6cc', '#fccf9a'];

const Tool = ({ id, tall }) => {
  if (id === '|') return <Rule />;
  if (id === 'v') return <DropButton aria-label="더 보기" />;
  const on = id.endsWith('*');
  const name = id.replace('*', '');
  return <ToolButton $on={on} $tall={tall} aria-label={name}><Icon name={name} /></ToolButton>;
};

const Group = ({ tools }) => (
  <ToolGroup><Grip />{tools.map((id, i) => <Tool key={i} id={id} />)}</ToolGroup>
);

const Navigator = ({ label, value, underline }) => (
  <NavRow>
    <IconButton aria-label="뒤로"><Icon name="navLeft" size={18} /></IconButton>
    <IconButton aria-label="앞으로"><Icon name="navRight" size={18} /></IconButton>
    <IconButton aria-label="홈"><Icon name="home" size={20} /></IconButton>
    <Combo>
      <ComboSelect aria-label={label} defaultValue={value} $underline={underline}><option>{value}</option></ComboSelect>
      <ComboArrow />
    </Combo>
    <IconButton aria-label="세부 정보"><Icon name="details" size={20} /></IconButton>
  </NavRow>
);

export default function App() {
  return (
    <Page>
      <Global />
      <MenuBar>{menus.map((m) => <MenuItem key={m}>{m}</MenuItem>)}</MenuBar>
      <Toolbar>
        <Group tools={mainTools} />
        <Group tools={viewTools} />
        <Group tools={solidTools} />
        <ToolGroup $fill>
          <Grip />
          <Tool id="shadows" />
          <Sun>
            <SunField>
              <Range type="range" min="0" max="100" defaultValue="86" aria-label="날짜" $track="linear-gradient(90deg, #fffdf2, #f0c63c 33%, #e8701c 50%, #e01010 66%, #f07a80 82%, #fff2f2)" />
              <Ticks>{[...'JFMAMJJASOND'].map((m, i) => <span key={i}>{m}</span>)}</Ticks>
            </SunField>
            <SunField>
              <Range type="range" min="0" max="100" defaultValue="63" aria-label="시간" $track="linear-gradient(90deg, #f6fafd, #8fb2d8 33%, #7388ee 58%, #5a62e0 70%, #20224e 88%, #0a0a10)" />
              <Ticks><span>07:08</span><span>정오</span><span>17:22</span></Ticks>
            </SunField>
          </Sun>
        </ToolGroup>
      </Toolbar>

      <Workspace>
        <ToolBox>
          <ToolStack>
            <Grip $across />
            {sideTools.map((set, i) => (
              <React.Fragment key={i}>
                {i > 0 && <Rule $across />}
                <ToolGrid>{set.map((id) => <Tool key={id} id={id} tall />)}</ToolGrid>
              </React.Fragment>
            ))}
          </ToolStack>
        </ToolBox>
        <Viewport><Model /></Viewport>
        <Tray>
          <TrayTitle>
            <span>기본 트레이</span>
            <IconButton $w={16} aria-label="고정"><Icon name="pin" size={10} /></IconButton>
            <CloseBox $red aria-label="닫기"><Cross /></CloseBox>
          </TrayTitle>
          <TrayBody>
            <Panels>
              <SectionHead><span>요소 정보</span><CloseBox aria-label="닫기"><Cross /></CloseBox></SectionHead>
              <EntityInfo>
                <EntityRow>선택 없음<Expander aria-label="펼치기"><ExpanderIcon plus /></Expander></EntityRow>
                <ThinLine $inset />
              </EntityInfo>
              <SectionHead><span>재질</span><CloseBox aria-label="닫기"><Cross /></CloseBox></SectionHead>
              <MaterialRow>
                <Preview />
                <NameField aria-label="재질 이름" defaultValue="기본값" />
                <MaterialTools>
                  <Expander $flip aria-label="접기"><ExpanderIcon /></Expander>
                  <Icon name="createMaterial" size={24} />
                  <DefaultChip aria-label="기본 재질" />
                </MaterialTools>
              </MaterialRow>
              <ThinLine />
              <TabRow>
                <Tab $on>선택</Tab>
                <Tab>편집</Tab>
                <Spacer />
                <IconButton $w={22} aria-label="스포이트"><Icon name="dropper" size={20} /></IconButton>
              </TabRow>
              <Navigator label="재질 목록" value="색상" />
              <ThinLine />
              <ListRow $grow>
                <Swatches>{colors.map((c) => <Swatch key={c} $color={c} aria-label={c} />)}</Swatches>
                <Scroller w={19} />
              </ListRow>
              <SubHead><span>선택</span></SubHead>
              <Navigator label="보조 목록" value="재질" underline />
              <ThinLine />
              <ListRow>
                <Swatches>
                  {[0, 1, 2].map((i) => <FolderCard key={i} aria-label="폴더"><Icon name="folder" size={36} /></FolderCard>)}
                </Swatches>
                <Scroller w={19} noDown />
              </ListRow>
            </Panels>
            <Scroller w={20} />
          </TrayBody>
        </Tray>
        <Caption>삭제(Delete) - Del</Caption>
        <KeyBadge>&lt;Delete&gt;</KeyBadge>
      </Workspace>

      <StatusBar>
        <StatusIcons>
          <svg viewBox="0 0 18 18" fill="none"><circle cx="9" cy="9" r="8" stroke="#9a9a9a" strokeWidth="1.400" /><path d="M9 15L6 8a3 3 0 1 1 6 0z" fill="#8a8a8a" /></svg>
          <svg viewBox="0 0 18 18" fill="none"><circle cx="9" cy="9" r="8" stroke="#111" strokeWidth="1.800" /><circle cx="9" cy="4.500" r="1.700" fill="#111" /><path d="M6.500 7h5v4h-1v4h-3v-4h-1z" fill="#111" /></svg>
          <svg viewBox="0 0 18 18" fill="none"><circle cx="9" cy="9" r="8" stroke="#9a9a9a" strokeWidth="1.400" /><circle cx="9" cy="6" r="3.500" fill="#8a8a8a" /><path d="M3 14c2-5 10-5 12 0-3 4-9 4-12 0z" fill="#8a8a8a" /></svg>
        </StatusIcons>
        <Bar />
        <StatusText>개체를 선택하십시오. 선택을 확대하려면 Shift를 누르십시오. 여러 항목을 선택하려면 마우스를 끄십시오.</StatusText>
        <Bar />
        <Units>단위<UnitsInput aria-label="단위" /></Units>
      </StatusBar>
    </Page>
  );
}
